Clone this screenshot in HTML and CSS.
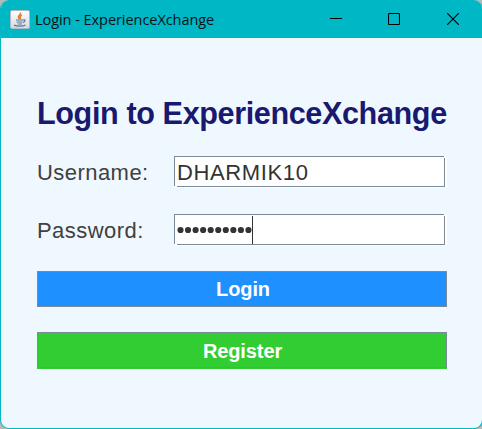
FILE: index.html
```html
<!DOCTYPE html>
<html lang="en">
<head>
<meta charset="utf-8">
<title>Login - ExperienceXchange</title>
<link rel="stylesheet" href="styles.css">
</head>
<body>
<main class="window">
  <header class="titlebar">
    <svg class="app-icon" width="20" height="19" viewBox="0 0 20 19">
      <defs><linearGradient id="tile" x1="0" y1="0" x2="0" y2="1"><stop offset="0" stop-color="#fff"/><stop offset="1" stop-color="#d5d9df"/></linearGradient></defs>
      <rect x=".5" y=".5" width="19" height="18" rx="1.5" fill="url(#tile)" stroke="#aeb9c3"/>
      <path d="M10.500 2.500c1 2-3 3-2 5 .4 1 1 1.200 1.200 2M11.800 5c-3 1.500-1.500 2.300-1.300 4" fill="none" stroke="#e47b35" stroke-width="1.500"/>
      <path d="M6 10h7M6.500 12h6M7.500 14h4.500M13 10c3-1 2.500 1.500 0 2.500M4 15c2 1.600 9 1.600 11.500 0" fill="none" stroke="#537c9e" stroke-width="1.200"/>
    </svg>
    <span class="caption">Login - ExperienceXchange</span>
    <div class="controls">
      <svg width="12" height="12" viewBox="0 0 12 12"><path d="M0 5.500h12"/></svg>
      <svg width="12" height="12" viewBox="0 0 12 12"><rect x=".5" y=".5" width="11" height="11" rx="1"/></svg>
      <svg width="12" height="12" viewBox="0 0 12 12"><path d="M.2.200l11.600 11.600M11.800.200.200 11.800"/></svg>
    </div>
  </header>
  <form class="content">
    <h1>Login to ExperienceXchange</h1>
    <div class="row">
      <label class="username-label">Username:</label>
      <div class="field"><span class="value">DHARMIK10</span></div>
    </div>
    <div class="row">
      <label class="password-label">Password:</label>
      <div class="field">
        <svg class="dots" width="76" height="5" viewBox="0 0 76 5"><path d="M3.500 3h70"/></svg>
        <span class="caret"></span>
      </div>
    </div>
    <button type="button" class="btn login"><span>Login</span></button>
    <button type="button" class="btn register"><span>Register</span></button>
  </form>
</main>
</body>
</html>
```
FILE: styles.css
```css
* { box-sizing: border-box; }
body { margin: 0; background: #b5b9bc; font-family: "Liberation Sans", Arial, sans-serif; overflow: hidden; }
.window { width: 483px; height: 429px; background: #f0f8ff; border: 1px solid #00b7c3; border-top: 0; border-radius: 9px; overflow: hidden; }
.titlebar { height: 38px; padding-left: 9px; display: flex; align-items: center; background: #00b7c6; }
.app-icon { flex: none; margin-right: 5px; }
.caption { font: 14.5px/20px "Open Sans", "Noto Sans", sans-serif; letter-spacing: -.05px; color: #061214; white-space: nowrap; padding-top: 1px; }
.controls { margin-left: auto; margin-right: 23px; display: flex; gap: 46px; }
.controls svg { display: block; position: relative; left: -1px; fill: none; stroke: #000; stroke-width: 1.1; }
.controls svg:last-child { left: 0; }
.content { padding: 56px 35px 0 36px; }
h1 { margin: 0 0 24px; font-size: 30.6px; line-height: 38px; letter-spacing: -.39px; color: #191970; white-space: nowrap; }
.row { display: flex; height: 31px; margin-bottom: 27px; }
.row + .row { margin-bottom: 26px; }
label { width: 137px; flex: none; font-size: 22px; line-height: 33px; letter-spacing: .45px; color: #404040; }
.field { position: relative; width: 271px; height: 31px; display: flex; align-items: center; padding-left: 2px; border: 1px solid #7a8a99; background: #fff; box-shadow: 2px 1px 0 #fff; }
.field::before, .field::after { content: ""; position: absolute; background: #fff; }
.field::before { left: -1px; bottom: -1px; width: 3px; height: 1px; }
.field::after { right: -1px; top: -1px; width: 1px; height: 2px; }
.value { font-size: 22px; line-height: 29px; color: #333; padding-top: 2px; letter-spacing: .62px; }
.dots { flex: none; overflow: visible; }
.dots path { stroke: #333; stroke-width: 6.2; stroke-linecap: round; stroke-dasharray: 0 7.55; }
.caret { width: 1px; height: 28px; background: #333; margin-left: -1px; }
.btn { display: block; width: 410px; padding: 0 0 0 1px; border: 1px solid #7a8a99; font: bold 20px/34px "Liberation Sans", Arial, sans-serif; letter-spacing: -.1px; color: #fff; }
.login { height: 36px; margin-bottom: 25px; padding-left: 2px; background: #1e90ff; }
.register { height: 36px; padding-top: 1px; background: #32cd32; box-shadow: 0 1px 0 #32cd32; }
```
